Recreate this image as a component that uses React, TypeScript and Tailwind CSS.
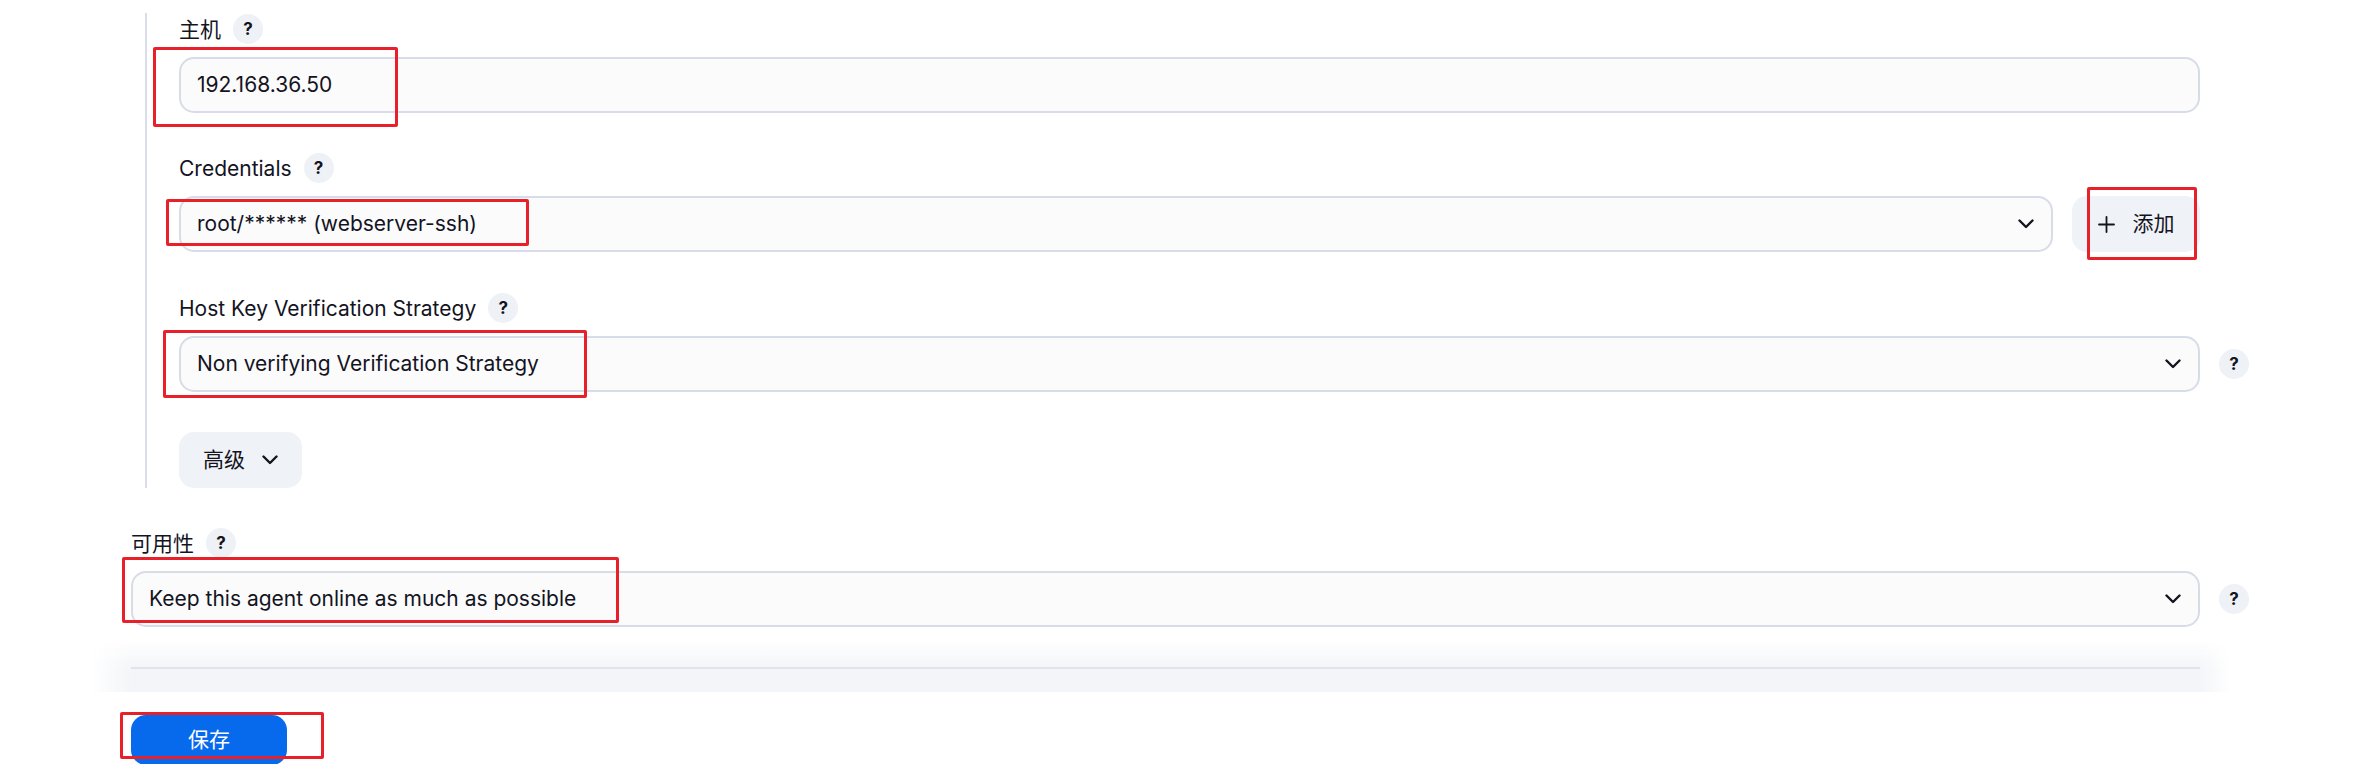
import React from "react"

const Chevron = () => (
  <svg width="16" height="10" viewBox="0 0 16 10" fill="none" className="shrink-0">
    <polyline points="1.5,1.5 8,8 14.5,1.5" stroke="#14141f" strokeWidth="2.4" strokeLinecap="round" strokeLinejoin="round" />
  </svg>
)

const Plus = () => (
  <svg width="17" height="17" viewBox="0 0 17 17" fill="none" className="shrink-0">
    <path d="M8.5 1v15M1 8.5h15" stroke="#14141f" strokeWidth="1.8" strokeLinecap="round" />
  </svg>
)

const Help = () => (
  <span className="w-[30px] h-[30px] rounded-full bg-[#eef1f5] flex items-center justify-center text-[17px] font-bold text-[#14141f] leading-none shrink-0">
    ?
  </span>
)

function Label({ text, className = "" }: { text: string; className?: string }) {
  return (
    <div className={"flex items-center gap-[12px] h-[30px] mb-[13px] " + className}>
      <span className="leading-none">{text}</span>
      <Help />
    </div>
  )
}

function Select({ value }: { value: string }) {
  return (
    <div className="flex-1 h-[56px] rounded-[15px] border-2 border-[#d7dce8] bg-[#fbfbfc] flex items-center justify-between pl-[16px] pr-[17px]">
      <span>{value}</span>
      <Chevron />
    </div>
  )
}

// red boxes drawn over the screenshot
const marks = [
  "left-[153px] top-[47px] w-[245px] h-[80px]",
  "left-[166px] top-[199px] w-[363px] h-[47px]",
  "left-[2087px] top-[187px] w-[110px] h-[73px]",
  "left-[163px] top-[330px] w-[424px] h-[68px]",
  "left-[122px] top-[557px] w-[497px] h-[66px]",
  "left-[120px] top-[712px] w-[204px] h-[47px]",
]

export default function App() {
  return (
    <div className="relative h-[764px] overflow-hidden bg-white text-[#14141f] text-[21px] font-['Inter','Noto_Sans_CJK_SC',sans-serif]">
      <div className="ml-[131px] w-[2118px] pt-[13px]">
        {/* SSH launcher section */}
        <div className="ml-[14px] border-l-2 border-[#d9dde8] pl-[32px] pt-px">
          <Label text="主机" />
          <div className="flex">
            <div className="flex-1 h-[56px] rounded-[15px] border-2 border-[#d7dce8] bg-[#fbfbfc] flex items-center pl-[16px]">
              192.168.36.50
            </div>
            <div className="w-[49px]" />
          </div>

          <Label text="Credentials" className="mt-[40px]" />
          <div className="flex">
            <div className="flex-1 flex gap-[19px]">
              <Select value="root/****** (webserver-ssh)" />
              <button className="w-[128px] h-[56px] rounded-[15px] bg-[#eff2f6] flex items-center justify-center gap-[18px]">
                <Plus />
                <span>添加</span>
              </button>
            </div>
            <div className="w-[49px]" />
          </div>

          <Label text="Host Key Verification Strategy" className="mt-[41px]" />
          <div className="flex items-center">
            <Select value="Non verifying Verification Strategy" />
            <div className="w-[49px] flex justify-end">
              <Help />
            </div>
          </div>

          <button className="mt-[40px] h-[56px] w-[123px] rounded-[15px] bg-[#eff2f6] flex items-center pl-[24px] gap-[17px]">
            <span>高级</span>
            <Chevron />
          </button>
        </div>

        <Label text="可用性" className="mt-[40px]" />
        <div className="flex items-center">
          <Select value="Keep this agent online as much as possible" />
          <div className="w-[49px] flex justify-end">
            <Help />
          </div>
        </div>

        {/* bottom sticker */}
        <div className="mt-[13px] -ml-[40px] w-[2140px] h-[52px] pt-[27px] pl-[40px] bg-[linear-gradient(to_bottom,rgba(243,245,248,0),#f3f5f8_55%)] [mask-image:linear-gradient(to_right,transparent,black_40px,black_calc(100%-32px),transparent)]">
          <div className="w-[2069px] h-[2px] bg-[#dfe3ea]" />
        </div>

        <button className="mt-[23px] w-[156px] h-[50px] rounded-[15px] bg-[#076aed] text-white flex items-center justify-center">
          保存
        </button>
      </div>

      {marks.map((m, i) => (
        <div key={i} className={"absolute border-[3px] border-[#e8202a] rounded-[2px] " + m} />
      ))}
    </div>
  )
}
